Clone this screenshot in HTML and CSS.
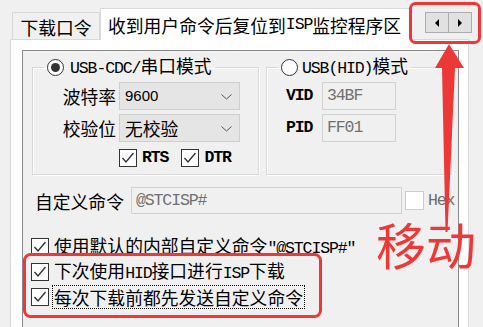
FILE: index.html
```html
<!DOCTYPE html>
<html lang="zh">
<head>
<meta charset="utf-8">
<title>ISP</title>
<link rel="stylesheet" href="styles.css">
</head>
<body>
<div class="tabbar">
  <div class="tab">下载口令</div>
  <div class="tab active">收到用户命令后复位到<span class="lat">ISP</span>监控程序区</div>
  <div class="spin">
    <span class="sbtn"><svg width="6" height="8" viewBox="0 0 6 8"><polygon points="5,0 5,8 1,4" fill="#000"/></svg></span>
    <span class="sbtn"><svg width="6" height="8" viewBox="0 0 6 8"><polygon points="1,0 1,8 5,4" fill="#000"/></svg></span>
  </div>
</div>
<div class="page">
  <div class="inner">
    <div class="groups">
      <fieldset class="grp g1">
        <legend><span class="radio on"></span><span><span class="lat">USB-CDC/</span>串口模式</span></legend>
        <div class="frow first">
          <span class="lbl">波特率</span>
          <div class="combo"><span class="num">9600</span><svg class="chev" width="11" height="6" viewBox="0 0 11 6"><polyline points="0.5,0.5 5.5,5 10.5,0.5" fill="none" stroke="#555" stroke-width="1"/></svg></div>
        </div>
        <div class="frow">
          <span class="lbl">校验位</span>
          <div class="combo"><span>无校验</span><svg class="chev" width="11" height="6" viewBox="0 0 11 6"><polyline points="0.5,0.5 5.5,5 10.5,0.5" fill="none" stroke="#555" stroke-width="1"/></svg></div>
        </div>
        <div class="checks">
          <span class="cb on"><svg width="16" height="16" viewBox="0 0 16 16"><polyline points="2.5,8 6,12 13.5,3" fill="none" stroke="#333" stroke-width="1.4"/></svg></span><span class="lat b">RTS</span>
          <span class="cb on second"><svg width="16" height="16" viewBox="0 0 16 16"><polyline points="2.5,8 6,12 13.5,3" fill="none" stroke="#333" stroke-width="1.4"/></svg></span><span class="lat b">DTR</span>
        </div>
      </fieldset>
      <fieldset class="grp g2">
        <legend><span class="radio"></span><span><span class="lat">USB(HID)</span>模式</span></legend>
        <div class="frow first">
          <span class="lbl2 lat b">VID</span>
          <div class="field small"><span class="lat">34BF</span></div>
        </div>
        <div class="frow">
          <span class="lbl2 lat b">PID</span>
          <div class="field small"><span class="lat">FF01</span></div>
        </div>
      </fieldset>
    </div>
    <div class="cmd">
      <span>自定义命令</span>
      <div class="field wide"><span class="lat">@STCISP#</span></div>
      <span class="cb off"></span><span class="lat hex">Hex</span>
    </div>
    <div class="opts">
      <div class="opt"><span class="cb on"><svg width="16" height="16" viewBox="0 0 16 16"><polyline points="2.5,8 6,12 13.5,3" fill="none" stroke="#333" stroke-width="1.4"/></svg></span><span>使用默认的内部自定义命令<span class="lat">"@STCISP#"</span></span></div>
      <div class="opt"><span class="cb on"><svg width="16" height="16" viewBox="0 0 16 16"><polyline points="2.5,8 6,12 13.5,3" fill="none" stroke="#333" stroke-width="1.4"/></svg></span><span>下次使用<span class="lat">HID</span>接口进行<span class="lat">ISP</span>下载</span></div>
      <div class="opt"><span class="cb on"><svg width="16" height="16" viewBox="0 0 16 16"><polyline points="2.5,8 6,12 13.5,3" fill="none" stroke="#333" stroke-width="1.4"/></svg></span><span class="focus">每次下载前都先发送自定义命令</span></div>
    </div>
  </div>
</div>
<svg class="marks" width="483" height="327" viewBox="0 0 483 327">
  <rect x="410.5" y="3.5" width="69" height="39" rx="5" fill="none" stroke="#ee3838" stroke-width="3"/>
  <rect x="24.5" y="254.5" width="296" height="62" rx="6" fill="none" stroke="#ee3838" stroke-width="3"/>
  <polygon points="449,44 464,68 455,68 447.5,232 445.5,232 442,68 435,68" fill="#ee3838"/>
</svg>
<div class="move">移动</div>
</body>
</html>
```

FILE: styles.css
```css
html, body {
  margin: 0;
  padding: 0;
}
body {
  width: 483px;
  height: 327px;
  overflow: hidden;
  position: relative;
  background: #f0f0f0;
  font-family: "Noto Sans CJK SC", "Noto Sans", sans-serif;
  font-size: 17.8px;
  line-height: 20px;
  color: #000;
}
.lat {
  font-family: "Liberation Mono", "DejaVu Sans Mono", monospace;
  font-size: 16.5px;
  letter-spacing: -1.1px;
}
.b { font-weight: bold; }

/* tabs */
.tabbar {
  display: flex;
  align-items: flex-end;
  height: 31px;
  margin-top: 8px;
  padding-left: 12px;
  position: relative;
  z-index: 2;
}
.tab {
  box-sizing: border-box;
  height: 27px;
  width: 88px;
  border: 1px solid #d9d9d9;
  border-bottom: 0;
  background: #f0f0f0;
  display: flex;
  align-items: center;
  justify-content: center;
  padding-top: 1px;
}
.tab.active {
  width: 312px;
  height: 32px;
  margin-bottom: -1px;
  background: #fff;
  justify-content: flex-start;
  padding-left: 7px;
  padding-top: 0;
}
.spin {
  align-self: flex-start;
  margin-top: 4px;
  margin-left: 13px;
  display: flex;
  width: 47px;
  height: 21px;
  box-sizing: border-box;
  border: 1px solid #adadad;
  background: #e1e1e1;
}
.sbtn {
  flex: 1;
  display: flex;
  align-items: center;
  justify-content: center;
}
.sbtn + .sbtn { border-left: 1px solid #adadad; }

/* page */
.page {
  box-sizing: border-box;
  margin-left: 10px;
  width: 459px;
  height: 288px;
  background: #fff;
  border: 1px solid #d9d9d9;
  border-bottom: 0;
  padding: 10px 9px 0 11px;
  position: relative;
  z-index: 1;
}
.inner {
  box-sizing: border-box;
  height: 278px;
  border: 1px solid #8a8a8a;
  border-bottom: 0;
  background: #f0f0f0;
}
.groups {
  display: flex;
  gap: 7px;
  margin: 7px 0 0 9px;
}
.grp {
  box-sizing: border-box;
  margin: 0;
  padding: 0 0 7px;
  min-width: 0;
  border: 1px solid #d8d8d8;
  box-shadow: inset 1px 1px 0 #fff, 1px 1px 0 #fff;
}
.g1 { width: 227px; }
.g2 { width: 186px; }
legend {
  margin-left: 11px;
  padding: 0 3px;
  height: 18px;
  line-height: 18px;
  display: flex;
  align-items: center;
  gap: 6px;
}
.g2 legend { gap: 4px; }
.radio {
  box-sizing: border-box;
  width: 17px;
  height: 17px;
  border: 1px solid #333;
  border-radius: 50%;
  background: #fff;
  display: inline-flex;
  align-items: center;
  justify-content: center;
}
.radio.on::after {
  content: "";
  width: 9px;
  height: 9px;
  border-radius: 50%;
  background: #333;
}
.frow {
  display: flex;
  align-items: center;
  height: 28px;
  margin-top: 4px;
}
.frow.first { margin-top: 6px; }
.lbl {
  width: 83px;
  text-align: right;
  margin-right: 3px;
}
.lbl2 {
  margin-left: 19px;
  width: 27px;
  margin-right: 9px;
}
.combo {
  box-sizing: border-box;
  width: 121px;
  height: 28px;
  border: 1px solid #cfcfcf;
  background: #e5e5e5;
  display: flex;
  align-items: center;
  padding: 0 7px 0 5px;
  justify-content: space-between;
}
.num {
  font-family: "Liberation Sans", sans-serif;
  font-size: 15px;
}
.chev { margin-top: 1px; }
.field {
  box-sizing: border-box;
  height: 28px;
  border: 1px solid #d2d2d2;
  background: #f0f0f0;
  display: flex;
  align-items: center;
  padding-left: 4px;
  color: #707070;
}
.field.small { width: 74px; }
.field.wide { width: 271px; margin-left: 7px; height: 27px; }
.checks {
  display: flex;
  align-items: center;
  height: 18px;
  margin-top: 7px;
  padding-left: 86px;
}
.cb {
  box-sizing: border-box;
  width: 18px;
  height: 18px;
  border: 1px solid #333;
  background: #fff;
  display: inline-flex;
  align-items: center;
  justify-content: center;
  flex: none;
  margin-right: 5px;
}
.cb.second { margin-left: 13px; }
.cb.off {
  border-color: #cccccc;
  width: 19px;
  height: 19px;
  margin-left: 3px;
  margin-right: 4px;
}
.hex { color: #6d6d6d; }
.cmd {
  display: flex;
  align-items: center;
  height: 27px;
  margin: 12px 0 0 12px;
}
.opts {
  margin: 20px 0 0 8px;
}
.opt {
  display: flex;
  align-items: center;
  height: 25px;
}
.focus {
  outline: 1px dotted #000;
  outline-offset: 1px;
}

/* annotation overlays */
.marks {
  position: absolute;
  left: 0;
  top: 0;
  z-index: 5;
}
.move {
  position: absolute;
  left: 376px;
  top: 221px;
  z-index: 6;
  font-size: 50px;
  line-height: 44px;
  color: #ee3838;
}
```
